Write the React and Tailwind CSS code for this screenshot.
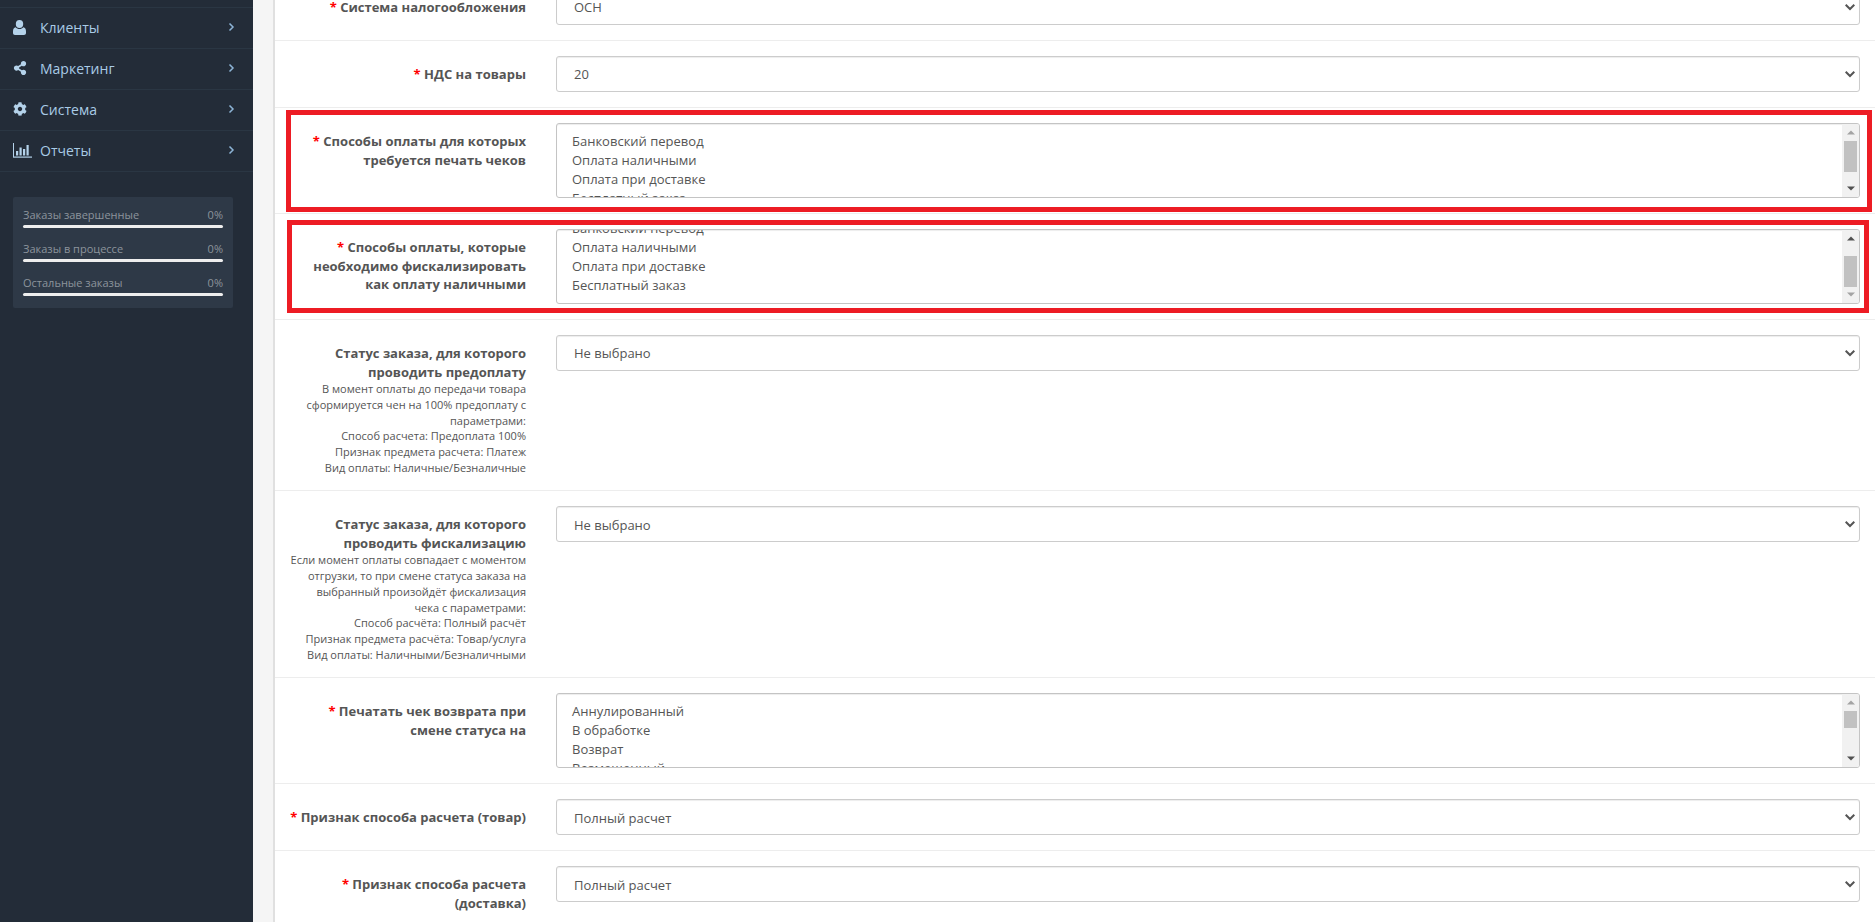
import React from "react";
import { FaShareAlt, FaCog } from "react-icons/fa";

const UserIcon = () => (
  <svg width="13" height="15" viewBox="0 0 13 15" fill="#b4d2ea">
    <ellipse cx="6.5" cy="4" rx="3.7" ry="4" />
    <path d="M2.6 7.2 C3.5 8.4 5 9 6.5 9 C8 9 9.5 8.4 10.4 7.2 C12 7.4 13 8.8 13 11.5 V13 C13 14.2 12.2 15 11 15 H2 C0.8 15 0 14.2 0 13 V11.5 C0 8.8 1 7.4 2.6 7.2 Z" />
  </svg>
);

const BarsIcon = () => (
  <svg width="19" height="15" viewBox="0 0 19 15" fill="#b4d2ea">
    <rect x="0" y="0" width="1" height="14" />
    <rect x="0" y="13.5" width="19" height="1.2" />
    <rect x="3" y="8" width="2.2" height="4.5" />
    <rect x="6.5" y="4.5" width="2.2" height="8" />
    <rect x="10" y="6" width="2.2" height="6.5" />
    <rect x="13.5" y="2" width="2.2" height="10.5" />
  </svg>
);

const Chevron = () => (
  <svg width="7" height="10" viewBox="0 0 7 10" fill="none" stroke="#8db4d6" strokeWidth="1.5" className="ml-auto">
    <path d="M1.5 1.5 L5 5 L1.5 8.5" />
  </svg>
);

const menu = [
  { label: "Клиенты", icon: <UserIcon /> },
  { label: "Маркетинг", icon: <FaShareAlt className="w-[14px] h-[14px] text-[#b4d2ea]" /> },
  { label: "Система", icon: <FaCog className="w-[14px] h-[14px] text-[#b4d2ea]" /> },
  { label: "Отчеты", icon: <BarsIcon /> },
];

const stats = ["Заказы завершенные", "Заказы в процессе", "Остальные заказы"];

const Sidebar = () => (
  <aside className="w-[253px] shrink-0 bg-[#232c38] pt-[7px]">
    {menu.map((m) => (
      <div key={m.label} className="flex items-center h-[41px] border-t border-[#2a3643] pl-[13px] pr-[18px] pb-[2px]">
        <span className="w-[27px] shrink-0 flex items-center">{m.icon}</span>
        <span className="text-[14px] text-[#a9cbe6]">{m.label}</span>
        <Chevron />
      </div>
    ))}
    <div className="border-t border-[#2a3643] pt-[25px] pl-[13px]">
      <div className="w-[220px] h-[111px] bg-[#2e3947] rounded-[2px] px-[10px] pt-[10px]">
        {stats.map((s) => (
          <div key={s} className="h-[34px]">
            <div className="flex justify-between text-[11px] leading-[15px] text-[#8c949c]">
              <span>{s}</span>
              <span>0%</span>
            </div>
            <div className="h-[3px] mt-[3px] bg-[#eeeeee] rounded-[2px]" />
          </div>
        ))}
      </div>
    </div>
  </aside>
);

const Star = () => <span className="text-[#ff0000]">* </span>;

const Row = ({ required, label, help, children }) => (
  <div className="flex gap-[30px] border-t border-[#ededed] pl-[14px] pr-[15px] py-[15px]">
    <div className="w-[237px] shrink-0 pt-[9px] text-right text-[13px] leading-[1.42857] text-[#555555]">
      <div className="font-bold">
        {required && <Star />}
        {label}
      </div>
      {help && (
        <div className="text-[11px] leading-[1.42857] font-normal">
          {help.map((h) => (
            <div key={h}>{h}</div>
          ))}
        </div>
      )}
    </div>
    <div className="flex-1 min-w-0">{children}</div>
  </div>
);

const Select = ({ value }) => (
  <div className="relative">
    <select
      defaultValue={value}
      className="block w-full h-[36px] appearance-none rounded-[3px] border border-[#cccccc] bg-white pl-[17px] pt-[2px] text-[13px] text-[#555555] shadow-[inset_0_1px_1px_rgba(0,0,0,0.075)]"
    >
      <option>{value}</option>
    </select>
    <svg width="10" height="7" viewBox="0 0 10 7" fill="none" stroke="#555555" strokeWidth="2" className="absolute right-[5px] top-[15px]">
      <path d="M0.7 0.8 L5 5 L9.3 0.8" />
    </svg>
  </div>
);

const Arrow = ({ up, dark }) => (
  <div className="h-[17px] flex items-center justify-center">
    <svg width="8" height="5" viewBox="0 0 8 5" fill={dark ? "#505050" : "#a3a3a3"}>
      <path d={up ? "M4 0.5 L8 4.5 L0 4.5 Z" : "M4 4.5 L8 0.5 L0 0.5 Z"} />
    </svg>
  </div>
);

const ListBox = ({ items, listClass, thumbClass, upDark, downDark }) => (
  <div className="flex h-[75px] overflow-hidden rounded-[3px] border border-[#c4c4c4] bg-white shadow-[inset_0_1px_1px_rgba(0,0,0,0.075)]">
    <div className="flex-1 min-w-0 overflow-hidden pl-[15px]">
      <div className={listClass}>
        {items.map((i) => (
          <div key={i} className="h-[19px] text-[13px] leading-[19px] text-[#555555]">
            {i}
          </div>
        ))}
      </div>
    </div>
    <div className="w-[17px] shrink-0 bg-[#f1f1f1] flex flex-col">
      <Arrow up dark={upDark} />
      <div className="flex-1 px-[2px]">
        <div className={thumbClass} />
      </div>
      <Arrow dark={downDark} />
    </div>
  </div>
);

const pay = ["Банковский перевод", "Оплата наличными", "Оплата при доставке", "Бесплатный заказ"];
const statuses = ["Аннулированный", "В обработке", "Возврат", "Возмещенный", "Доставлено"];

const Form = () => (
  <div className="-mt-[27px]">
    <Row required label="Система налогообложения"><Select value="ОСН" /></Row>
    <Row required label="НДС на товары"><Select value="20" /></Row>
    <Row required label="Способы оплаты для которых требуется печать чеков">
      <ListBox items={pay} listClass="pt-[8px]" thumbClass="h-[31px] mt-[0px] bg-[#c1c1c1]" downDark />
    </Row>
    <Row required label="Способы оплаты, которые необходимо фискализировать как оплату наличными">
      <ListBox items={pay} listClass="-mt-[11px]" thumbClass="h-[31px] mt-[9px] bg-[#c1c1c1]" upDark />
    </Row>
    <Row
      label="Статус заказа, для которого проводить предоплату"
      help={[
        "В момент оплаты до передачи товара сформируется чен на 100% предоплату с параметрами:",
        "Способ расчета: Предоплата 100%",
        "Признак предмета расчета: Платеж",
        "Вид оплаты: Наличные/Безналичные",
      ]}
    >
      <Select value="Не выбрано" />
    </Row>
    <Row
      label="Статус заказа, для которого проводить фискализацию"
      help={[
        "Если момент оплаты совпадает с моментом отгрузки, то при смене статуса заказа на выбранный произойдёт фискализация чека с параметрами:",
        "Способ расчёта: Полный расчёт",
        "Признак предмета расчёта: Товар/услуга",
        "Вид оплаты: Наличными/Безналичными",
      ]}
    >
      <Select value="Не выбрано" />
    </Row>
    <Row required label="Печатать чек возврата при смене статуса на">
      <ListBox items={statuses} listClass="pt-[8px]" thumbClass="h-[17px] bg-[#c1c1c1]" downDark />
    </Row>
    <Row required label="Признак способа расчета (товар)"><Select value="Полный расчет" /></Row>
    <Row required label="Признак способа расчета (доставка)"><Select value="Полный расчет" /></Row>
  </div>
);

export default function App() {
  return (
    <div className="relative flex h-[922px] overflow-hidden bg-[#f5f5f5] font-['Open_Sans',sans-serif]">
      <Sidebar />
      <main className="flex-1 min-w-0 pl-[20px]">
        <div className="h-full flow-root bg-white border-l-2 border-[#e0e0e0]">
          <Form />
        </div>
      </main>
      <div className="absolute left-[286px] top-[110px] w-[1586px] h-[102px] border-[5px] border-[#ed1c24]" />
      <div className="absolute left-[287px] top-[220px] w-[1582px] h-[93px] border-[5px] border-[#ed1c24]" />
    </div>
  );
}
